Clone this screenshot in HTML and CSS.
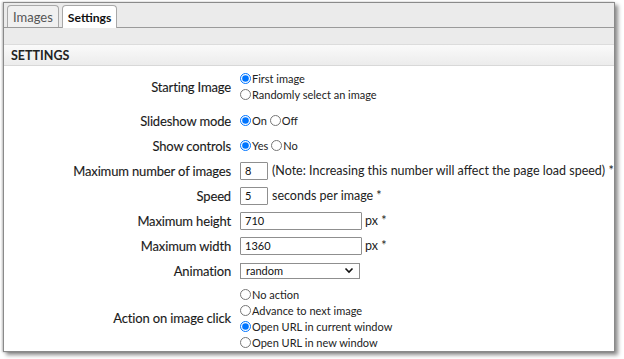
FILE: index.html
```html
<!DOCTYPE html>
<html>
<head>
<meta charset="utf-8">
<link rel="stylesheet" href="styles.css">
</head>
<body>
<div class="frame">
  <div class="tabbar">
    <div class="tab">Images</div>
    <div class="tab active">Settings</div>
  </div>
  <div class="gap"></div>
  <div class="header">SETTINGS</div>
  <div class="form">
    <div class="row first">
      <div class="label">Starting Image</div>
      <div class="ctl stack">
        <label class="opt"><input type="radio" name="start" checked>First image</label>
        <label class="opt"><input type="radio" name="start">Randomly select an image</label>
      </div>
    </div>
    <div class="row">
      <div class="label">Slideshow mode</div>
      <div class="ctl"><label class="opt"><input type="radio" name="ss" checked>On</label> <label class="opt"><input type="radio" name="ss">Off</label></div>
    </div>
    <div class="row">
      <div class="label">Show controls</div>
      <div class="ctl"><label class="opt"><input type="radio" name="sc" checked>Yes</label> <label class="opt"><input type="radio" name="sc">No</label></div>
    </div>
    <div class="row">
      <div class="label">Maximum number of images</div>
      <div class="ctl"><input class="txt small" type="text" value="8"><span class="note">(Note: Increasing this number will affect the page load speed) *</span></div>
    </div>
    <div class="row">
      <div class="label">Speed</div>
      <div class="ctl"><input class="txt small" type="text" value="5"><span class="note">seconds per image *</span></div>
    </div>
    <div class="row">
      <div class="label">Maximum height</div>
      <div class="ctl"><input class="txt wide" type="text" value="710"><span class="note">px *</span></div>
    </div>
    <div class="row">
      <div class="label">Maximum width</div>
      <div class="ctl"><input class="txt wide" type="text" value="1360"><span class="note">px *</span></div>
    </div>
    <div class="row">
      <div class="label">Animation</div>
      <div class="ctl">
        <div class="select"><span>random</span><svg width="10" height="7" viewBox="0 0 10 7"><path d="M1.5 1.5 L5 5 L8.5 1.5" fill="none" stroke="#111" stroke-width="1.6"/></svg></div>
      </div>
    </div>
    <div class="row last">
      <div class="label">Action on image click</div>
      <div class="ctl stack">
        <label class="opt"><input type="radio" name="act">No action</label>
        <label class="opt"><input type="radio" name="act">Advance to next image</label>
        <label class="opt"><input type="radio" name="act" checked>Open URL in current window</label>
        <label class="opt"><input type="radio" name="act">Open URL in new window</label>
      </div>
    </div>
  </div>
</div>
</body>
</html>
```
FILE: styles.css
```css
html, body {
  margin: 0;
  padding: 0;
  background: #ffffff;
  width: 624px;
  height: 359px;
  overflow: hidden;
}
body {
  font-family: Lato, "Open Sans", sans-serif;
  color: #222;
}
.frame {
  margin: 2px 0 0 3px;
  width: 610px;
  height: 348px;
  border: 1px solid #8a8a8a;
  box-shadow: 3px 3px 4px rgba(0,0,0,0.45), -1px 0 2px rgba(0,0,0,0.25);
  background: #fff;
  overflow: hidden;
}
.tabbar {
  background: #ebebeb;
  height: 24px;
  border-bottom: 1px solid #9a9a9a;
  display: flex;
  align-items: flex-end;
  padding-left: 3px;
  gap: 3px;
}
.tab {
  height: 22px;
  box-sizing: border-box;
  border: 1px solid #a8a8a8;
  border-bottom: none;
  border-radius: 4px 4px 0 0;
  padding: 3px 5px 0 5px;
  font-size: 13px;
  color: #555;
  background: #f0f0f0;
  line-height: 17px;
}
.tab.active {
  background: #fff;
  color: #111;
  font-weight: bold;
  font-size: 12.2px;
  height: 23px;
  margin-bottom: -1px;
  position: relative;
  padding: 3px 5px 0 5px;
}
.gap {
  height: 16px;
  background: #ebebeb;
  border-bottom: 1px solid #dcdcdc;
}
.header {
  height: 21px;
  box-sizing: border-box;
  background: linear-gradient(#fafafa, #ececec);
  border-bottom: 1px solid #d8d8d8;
  font-size: 12.5px;
  font-weight: bold;
  padding: 3px 0 0 7px;
  color: #222;
}
.form {
  display: flex;
  flex-direction: column;
}
.row {
  display: grid;
  grid-template-columns: 227px 1fr;
  column-gap: 9px;
  align-items: center;
  min-height: 25px;
}
.row.first {
  padding: 4px 0 5px;
}
.row.last {
  padding-top: 3px;
}
.label {
  text-align: right;
  font-size: 13px;
  letter-spacing: -0.15px;
  color: #1a1a1a;
  -webkit-text-stroke: 0.12px #1a1a1a;
}
.ctl {
  display: flex;
  align-items: center;
  font-size: 11px;
}
.stack {
  flex-direction: column;
  align-items: flex-start;
}
.stack .opt {
  height: 16.5px;
  display: flex;
  align-items: center;
}
.row.last .stack .opt {
  height: 16px;
}
.opt {
  display: inline-flex;
  align-items: center;
  margin-right: 3px;
  font-size: 11px;
  color: #222;
}
.opt input {
  width: 11px;
  height: 11px;
  margin: 0 1px 0 0;
  accent-color: #0075ff;
}
.txt {
  box-sizing: border-box;
  height: 18px;
  border: 1px solid #8f8f8f;
  border-radius: 1px;
  font-family: Lato, "Open Sans", sans-serif;
  font-size: 11px;
  padding: 0 4px;
  color: #111;
  margin: 0 4px 0 0;
}
.txt.small { width: 28px; }
.txt.wide { width: 122px; margin-right: 3px; }
.note {
  font-size: 12.5px;
  color: #222;
}
.select {
  box-sizing: border-box;
  width: 120px;
  height: 16px;
  border: 1px solid #8f8f8f;
  display: flex;
  align-items: center;
  justify-content: space-between;
  padding: 0 5px 0 5px;
  font-size: 11px;
  color: #111;
}
```
